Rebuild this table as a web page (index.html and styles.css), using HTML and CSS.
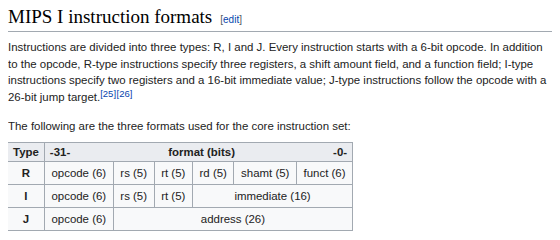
FILE: index.html
```html
<!DOCTYPE html>
<html>
<head>
<meta charset="utf-8">
<link rel="stylesheet" href="styles.css">
</head>
<body>
<h2 class="heading"><span class="title">MIPS I instruction formats</span><span class="edit">[<a href="#">edit</a>]</span></h2>
<p class="para">Instructions are divided into three types: R, I and J. Every instruction starts with a 6-bit opcode. In addition to the opcode, R-type instructions specify three registers, a shift amount field, and a function field; I-type instructions specify two registers and a 16-bit immediate value; J-type instructions follow the opcode with a 26-bit jump target.<sup class="ref"><a href="#">[25]</a><a href="#">[26]</a></sup></p>
<p class="para last">The following are the three formats used for the core instruction set:</p>
<table class="fmt">
<tr class="head">
<th class="type-h">Type</th>
<th colspan="6" class="bits-h"><div class="bits"><span>-31-</span><span>format (bits)</span><span>-0-</span></div></th>
</tr>
<tr>
<td class="type">R</td>
<td>opcode (6)</td><td>rs (5)</td><td>rt (5)</td><td>rd (5)</td><td>shamt (5)</td><td>funct (6)</td>
</tr>
<tr>
<td class="type">I</td>
<td>opcode (6)</td><td>rs (5)</td><td>rt (5)</td><td colspan="3">immediate (16)</td>
</tr>
<tr>
<td class="type">J</td>
<td>opcode (6)</td><td colspan="5">address (26)</td>
</tr>
</table>
</body>
</html>
```
FILE: styles.css
```css
body {
  margin: 8px;
  background: #fff;
  color: #222;
  font-family: "Liberation Sans", Arial, sans-serif;
  font-size: 11.45px;
}
a { color: #0645ad; text-decoration: none; }
.heading {
  margin: 0;
  padding: 0 0 3px;
  border-bottom: 1px solid #a2a9b1;
  font-weight: normal;
  line-height: 17px;
  display: flex;
  align-items: baseline;
}
.title {
  font-family: "Liberation Serif", "Times New Roman", serif;
  font-size: 19px;
  color: #000;
}
.edit {
  font-family: "Liberation Sans", Arial, sans-serif;
  font-size: 10px;
  margin-left: 8px;
  color: #54595d;
}
.para {
  margin: 7px 0 12px;
  line-height: 16.7px;
}
.para.last { margin-bottom: 7px; }
.ref {
  font-size: 9.5px;
  line-height: 1;
  vertical-align: 4px;
}
.ref a { margin-right: 0.5px; }
.fmt {
  border-collapse: collapse;
  border: 1px solid #a2a9b1;
  background: #f8f9fa;
  margin-left: -1px;
}
.fmt th, .fmt td {
  border: 1px solid #a2a9b1;
  text-align: center;
  line-height: 16px;
}
.fmt th { background: #eaecf0; padding: 1px 5px; }
.fmt td { padding: 3px 6.6px; }
.bits { display: flex; justify-content: space-between; }
.type { font-weight: bold; }
```
